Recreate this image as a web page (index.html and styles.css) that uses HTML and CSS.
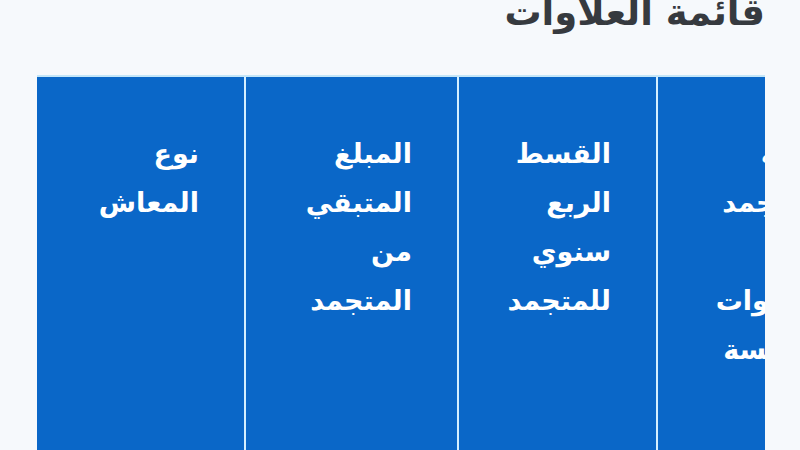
FILE: index.html
```html
<!DOCTYPE html>
<html lang="ar">
<head>
<meta charset="utf-8">
<link rel="stylesheet" href="styles.css">
</head>
<body>
<div class="page">
  <h1 class="title" dir="rtl">قائمة العلاوات</h1>
  <div class="table-wrap">
    <table class="allowances" dir="rtl">
      <thead>
        <tr>
          <th class="c4">قيمة<br>المتجمد<br>من<br>العلاوات<br>الخمسة</th>
          <th class="c3">القسط<br>الربع<br>سنوي<br>للمتجمد</th>
          <th class="c2">المبلغ<br>المتبقي<br>من<br>المتجمد</th>
          <th class="c1">نوع<br>المعاش</th>
        </tr>
      </thead>
    </table>
  </div>
</div>
</body>
</html>
```
FILE: styles.css
```css
html, body {
  margin: 0;
  padding: 0;
  background: #f6f9fc;
  overflow: hidden;
}
.page {
  width: 728px;
  margin-left: 37px;
}
.title {
  margin: -13px 0 0;
  text-align: right;
  font-family: "DejaVu Sans", sans-serif;
  font-weight: bold;
  font-size: 37px;
  line-height: 52px;
  color: #363a3f;
}
.table-wrap {
  margin-top: 36px;
  width: 728px;
  overflow: hidden;
  border-top: 2px solid #c4e6f8;
}
.allowances {
  border-collapse: collapse;
  table-layout: fixed;
  width: 832px;
  font-family: "DejaVu Sans", sans-serif;
}
.allowances th {
  background: #0a67c8;
  color: #ffffff;
  font-weight: bold;
  font-size: 27px;
  line-height: 49px;
  text-align: right;
  vertical-align: top;
  padding: 52px 45px 0 0;
  height: 400px;
  box-sizing: border-box;
  border-left: 2px solid #d4efff;
}
.allowances th.c1 { width: 208px; border-left: none; }
.allowances th.c2 { width: 213px; }
.allowances th.c3 { width: 199px; }
.allowances th.c4 { width: 212px; }
```
